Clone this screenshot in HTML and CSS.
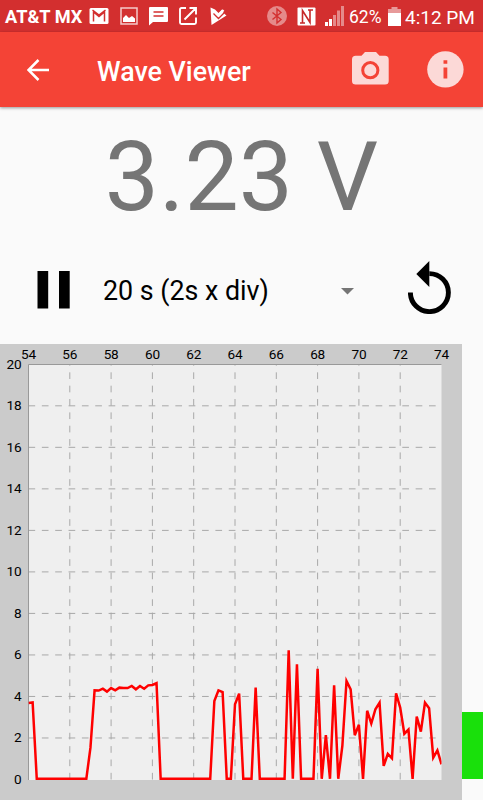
FILE: index.html
```html
<!DOCTYPE html>
<html lang="en">
<head>
    <meta charset="UTF-8">
    <meta name="viewport" content="width=device-width, initial-scale=1.0">
    <title>Wave Viewer</title>
    <link rel="stylesheet" href="styles.css">
</head>
<body>

<div class="status-bar">
    <span class="carrier">AT&amp;T MX</span>
    <svg class="mail" width="20" height="18" viewBox="0 0 20 18">
        <rect x="0.500" y="1" width="19" height="16" rx="1.5" fill="#fff"/>
        <path d="M4.500 14.500V5l5.500 4.500L15.500 5v9.500M3.500 3l6.500 5 6.500-5" fill="none" stroke="#d32f2f" stroke-width="1.500"/>
    </svg>
    <svg class="picture" width="18" height="18" viewBox="0 0 18 18">
        <rect x="1" y="1" width="16" height="16" fill="none" stroke="#fff" stroke-opacity=".75" stroke-width="1.500"/>
        <path d="M3 15v-4l3-3 3 3 3-2 3 2.500V15z" fill="#fff"/>
    </svg>
    <svg class="message" width="19" height="19" viewBox="0 0 19 19">
        <path d="M1 0h17q1 0 1 1v13q0 1-1 1H4l-4 3.500V1q0-1 1-1z" fill="#fff"/>
        <path d="M4.500 5h10M4.500 9h10" stroke="#d32f2f" stroke-width="1.300"/>
    </svg>
    <svg class="open" width="18" height="18" viewBox="0 0 18 18" fill="none" stroke="#fff" stroke-width="1.900">
        <path d="M7 1H2.500Q1 1 1 2.500v13Q1 17 2.500 17h13q1.500 0 1.500-1.500V10.500M10.500 1H17v6.500M16.500 1.500L5.500 12.500"/>
    </svg>
    <svg class="check" width="17" height="19" viewBox="0 0 17 19">
        <path d="M0.500 0.500L5 2.500 8.500 6 12 2.500l1.500 3.500L16.500 8.500 1.500 18z" fill="#fff"/>
        <path d="M3.500 6.500l5 5L14 6" fill="none" stroke="#d32f2f" stroke-width="1.400"/>
        <path d="M4.500 4.500l4 4L13.500 3" fill="none" stroke="#fff" stroke-width="2.200"/>
    </svg>
    <svg class="bluetooth" width="20" height="20" viewBox="0 0 20 20">
        <circle cx="10" cy="10" r="10" fill="#e58a8a"/>
        <path d="M5.500 6.500l8.500 7-4 3.500V3l4 3.500-8.500 7" fill="none" stroke="#d32f2f" stroke-width="1.400"/>
    </svg>
    <svg class="nfc" width="19" height="19" viewBox="0 0 19 19">
        <rect x="0.500" y="0.500" width="18" height="18" rx="1" fill="#fff"/>
        <path d="M5.500 16V3.500L13 15.500V3M3 16h5M11 3h5" fill="none" stroke="#c62828" stroke-width="1.600"/>
    </svg>
    <svg class="signal" width="20" height="20" viewBox="0 0 20 20">
        <path d="M0 16h3v4H0zM4 13h3v7H4z" fill="#fff"/>
        <path d="M8 9h3v11H8zM12 4.500h3V20h-3zM16 0h3v20h-3z" fill="#e58a8a"/>
    </svg>
    <span class="percent">62%</span>
    <svg class="battery" width="13" height="19" viewBox="0 0 13 19">
        <path d="M3.500 0h6v2H13v4H0V2h3.500z" fill="#e79a9a"/>
        <path d="M0 6h13v13H0z" fill="#fff"/>
    </svg>
    <span class="clock">4:12 PM</span>
</div>

<div class="app-bar">
    <svg class="back" width="22" height="22" viewBox="0 0 22 22" fill="none" stroke="#fff" stroke-width="2.500">
        <path d="M22 11H2M11.500 1L1.500 11l10 10"/>
    </svg>
    <h1>Wave Viewer</h1>
    <svg class="camera" width="37" height="33" viewBox="0 0 37 33">
        <path d="M13 0h11l3.500 3.700H33q3.700 0 3.700 3.700V29q0 3.500-3.700 3.500H3.700Q0 32.500 0 29V7.400Q0 3.700 3.700 3.700h5.800z" fill="#fcd9d7"/>
        <circle cx="18.300" cy="18.200" r="7.600" fill="#fcd9d7" stroke="#f44336" stroke-width="3"/>
    </svg>
    <svg class="info" width="37" height="37" viewBox="0 0 37 37">
        <circle cx="18.400" cy="18.400" r="18.200" fill="#fcd9d7"/>
        <path d="M16.500 9.300h3.800v3.500h-3.800zM16.500 16.500h3.800v11h-3.800z" fill="#f44336"/>
    </svg>
</div>

<div class="reading">3.23 V</div>

<div class="controls">
    <svg class="pause" width="33" height="38" viewBox="0 0 33 38">
        <path d="M0.500 0h10.700v37.500H0.500zM22 0h10.700v37.500H22z"/>
    </svg>
    <div class="select">
        <span>20 s (2s x div)</span>
        <svg width="13" height="7" viewBox="0 0 13 7"><path d="M0 0h13L6.500 6.500z" fill="#757575"/></svg>
    </div>
    <svg class="replay" width="43" height="53" viewBox="0 0 43 53">
        <path d="M21.300 12.600A19 19 0 1 1 2.400 31.600" fill="none" stroke="#000" stroke-width="4.900"/>
        <path d="M21.300 0v26L8.300 13z"/>
    </svg>
</div>

<div class="viewer">
    <svg id="chart" class="chart" width="461.500" height="456" viewBox="0 0 461.500 456">
        <defs>
            <clipPath id="plotArea"><rect x="28.500" y="20" width="413" height="416"/></clipPath>
        </defs>
        <rect class="plot" x="28.500" y="20.300" width="413" height="415.700"/>
        <g id="grid" class="grid"></g>
        <path class="axis" d="M28.500 436V20.500H441.500"/>
        <polyline id="wave" class="wave" clip-path="url(#plotArea)"/>
        <g id="labels"></g>
    </svg>
    <div class="level"></div>
</div>

<script>
    // one sample every 0.2 s, starting at 54 s
    const samples = [
        3.65, 3.68, 0, 0, 0, 0, 0, 0, 0, 0,
        0, 0, 0, 0, 0, 1.5, 4.26, 4.25, 4.34, 4.2,
        4.37, 4.26, 4.39, 4.37, 4.37, 4.47, 4.31, 4.47, 4.34, 4.5,
        4.52, 4.61, 0, 0, 0, 0, 0, 0, 0, 0,
        0, 0, 0, 0, 0, 3.75, 4.26, 4.18, 0, 0,
        3.59, 4.1, 0, 0, 0, 4.39, 0, 0, 0, 0,
        0, 0, 0, 6.19, 0, 5.51, 0, 0, 0, 0,
        5.3, 0, 2.11, 0, 4.5, 0, 1.6, 4.71, 4.31, 2.1,
        2.6, 0, 3.28, 2.66, 3.35, 3.67, 0.62, 1.2, 0.99, 4.12,
        3.43, 2.17, 2.37, 0, 3, 2.27, 3.67, 3.4, 1.02, 1.37, 0.7
    ];
    const left = 28.5, right = 441.5, top0 = 20.3, bottom = 435.5;
    const grid = document.getElementById('grid');
    const labels = document.getElementById('labels');

    function add(parent, tag, attrs, text) {
        const el = document.createElementNS('http://www.w3.org/2000/svg', tag);
        for (const name in attrs) {
            el.setAttribute(name, attrs[name]);
        }
        if (text !== undefined) {
            el.textContent = text;
        }
        parent.appendChild(el);
    }

    for (let i = 0; i <= 10; i++) {
        const x = left + i * 41.3;
        const y = bottom - i * 41.52;
        if (i > 0 && i < 10) {
            add(grid, 'line', { x1: x, y1: bottom, x2: x, y2: top0 });
            add(grid, 'line', { x1: left, y1: y, x2: right, y2: y });
        }
        add(labels, 'text', { x: x, y: 15, 'text-anchor': 'middle' }, 54 + i * 2);
        add(labels, 'text', { x: 21.5, y: y + 4.5, 'text-anchor': 'end' }, i * 2);
    }

    document.getElementById('wave').setAttribute('points', samples.map((v, i) =>
        (left + i * 4.13).toFixed(2) + ',' + (434.8 - v * 20.76).toFixed(2)).join(' '));
</script>

</body>
</html>
```
FILE: styles.css
```css
body {
    font-family: Roboto, sans-serif;
    margin: 0;
    height: 800px;
    overflow: hidden;
    background-color: #fafafa;
}
svg {
    display: block;
    flex: none;
}
.status-bar {
    display: flex;
    align-items: center;
    height: 32px;
    box-sizing: border-box;
    padding-left: 5px;
    background-color: #d32f2f;
    color: #fff;
    font-size: 18px;
    white-space: nowrap;
}
.carrier {
    width: 84px;
    font-size: 18.2px;
    font-weight: bold;
}
.picture {
    margin-left: 11px;
}
.message {
    margin-left: 11px;
}
.open {
    margin-left: 11px;
}
.check {
    margin-left: 13px;
}
.bluetooth {
    margin-left: 40px;
}
.nfc {
    margin-left: 10px;
}
.signal {
    margin-left: 9px;
}
.percent {
    width: 34px;
    margin-left: 4px;
    padding-top: 2px;
    font-size: 17.5px;
}
.battery {
    margin-left: 5px;
}
.clock {
    margin-left: 4px;
    padding-top: 2px;
    font-size: 19px;
}
.app-bar {
    display: flex;
    align-items: center;
    height: 75px;
    box-sizing: border-box;
    padding: 0 19px 0 27px;
    background-color: #f44336;
    box-shadow: 0 1px 3px rgba(0, 0, 0, 0.4);
}
.app-bar h1 {
    flex: 1;
    margin: 4px 0 0 48px;
    color: #fff;
    font-size: 26.8px;
    font-weight: 500;
}
.camera {
    margin: 0 38px 3px 0;
}
.reading {
    height: 137px;
    line-height: 140px;
    text-align: center;
    color: #757575;
    font-size: 96.5px;
}
.controls {
    display: flex;
    align-items: center;
    height: 100px;
    box-sizing: border-box;
    padding: 0 32px 8px 37px;
}
.select {
    flex: 1;
    display: flex;
    align-items: center;
    justify-content: space-between;
    margin: 2px 54px 0 33px;
    font-size: 26.8px;
}
.replay {
    margin-bottom: 5px;
}
.viewer {
    display: flex;
    align-items: flex-start;
    height: 456px;
}
.chart {
    background-color: #cbcbcb;
}
.plot {
    fill: #efefef;
}
.grid {
    stroke: #a8a8a8;
    stroke-width: 1;
    stroke-dasharray: 6.67 6.68;
}
.axis {
    fill: none;
    stroke: #999;
}
.wave {
    fill: none;
    stroke: #f00;
    stroke-width: 2.5;
}
.chart text {
    font-size: 13.6px;
    letter-spacing: -0.2px;
}
.level {
    flex: 1;
    height: 67px;
    margin-top: 368px;
    background-color: #19e00b;
}
```
